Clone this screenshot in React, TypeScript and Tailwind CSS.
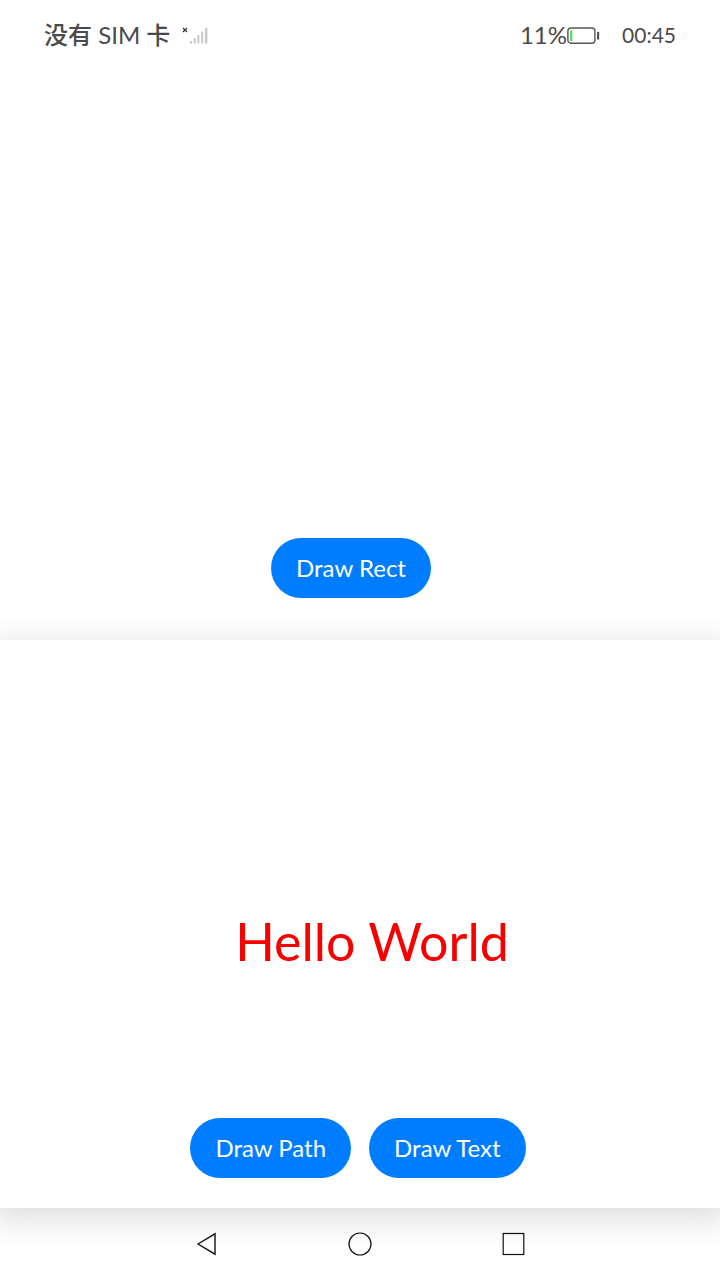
import React from "react";

function PillButton({ children }: { children: React.ReactNode }) {
  return (
    <button
      type="button"
      className="h-[60px] rounded-full bg-[#007dff] px-[25px] text-[24px] leading-8 whitespace-nowrap text-white"
    >
      {children}
    </button>
  );
}

function SignalIcon() {
  return (
    <svg width="28" height="20" viewBox="0 0 28 20" aria-hidden="true">
      <path d="M1 3l4 4M5 3l-4 4" stroke="#333" strokeWidth="1.2" fill="none" />
      <g fill="#c8c8c8">
        <rect x="8" y="16" width="2" height="2.500" />
        <rect x="11.700" y="13" width="2" height="5.500" />
        <rect x="15.400" y="10" width="2" height="8.500" />
        <rect x="19.200" y="6.500" width="2" height="12" />
        <rect x="23" y="3" width="2.400" height="15.500" />
      </g>
    </svg>
  );
}

function BatteryIcon() {
  return (
    <svg width="33" height="18" viewBox="0 0 33 18" aria-hidden="true">
      <rect x="0.900" y="2" width="27" height="15.200" rx="3" fill="none" stroke="#555" strokeWidth="1.4" />
      <rect x="3" y="4.300" width="2.400" height="10.600" rx="0.500" fill="#5fd96b" />
      <rect x="30" y="5.900" width="2.200" height="7.600" fill="#555" />
    </svg>
  );
}

function StatusBar() {
  return (
    <header className="flex h-[70px] items-center justify-between px-11 text-[24px] leading-8 text-[#4a4a4a]">
      <div className="flex items-center gap-3">
        <span className="whitespace-nowrap">
          <span className="font-medium">没有</span> SIM <span className="font-medium">卡</span>
        </span>
        <SignalIcon />
      </div>
      <div className="flex items-center">
        <span>11%</span>
        <BatteryIcon />
        <span className="ml-[22px] text-[21px]">00:45</span>
      </div>
    </header>
  );
}

function NavigationBar() {
  return (
    <nav className="flex h-[72px] items-center justify-center gap-[126px]">
      <button type="button" aria-label="Back">
        <svg width="28" height="28" viewBox="0 0 28 28" fill="none" stroke="#111" strokeWidth="1.4">
          <path d="M6 14L23 3.800V24.200Z" />
        </svg>
      </button>
      <button type="button" aria-label="Home">
        <svg width="28" height="28" viewBox="0 0 28 28" fill="none" stroke="#111" strokeWidth="1.200">
          <circle cx="14" cy="14" r="11" />
        </svg>
      </button>
      <button type="button" aria-label="Recent apps">
        <svg width="28" height="28" viewBox="0 0 28 28" fill="none" stroke="#111" strokeWidth="1.200">
          <rect x="3.200" y="3.500" width="20.600" height="21" />
        </svg>
      </button>
    </nav>
  );
}

export default function App() {
  return (
    <div className="flex min-h-screen flex-col overflow-hidden bg-white font-['Lato','Noto_Sans_CJK_SC',sans-serif]">
      <StatusBar />
      <section className="flex h-[570px] items-end justify-center pr-[18px] pb-[42px]">
        <PillButton>Draw Rect</PillButton>
      </section>
      <main className="-mx-2.5 flex flex-1 flex-col items-center bg-white pb-[30px] shadow-[0_8px_36px_rgba(0,0,0,0.16)]">
        <div className="flex flex-1 items-end pb-[145px] pl-6">
          <p className="text-[52px] leading-[64px] whitespace-nowrap text-[#f80000]">Hello World</p>
        </div>
        <div className="flex gap-[18px] pr-1">
          <PillButton>Draw Path</PillButton>
          <PillButton>Draw Text</PillButton>
        </div>
      </main>
      <NavigationBar />
    </div>
  );
}
